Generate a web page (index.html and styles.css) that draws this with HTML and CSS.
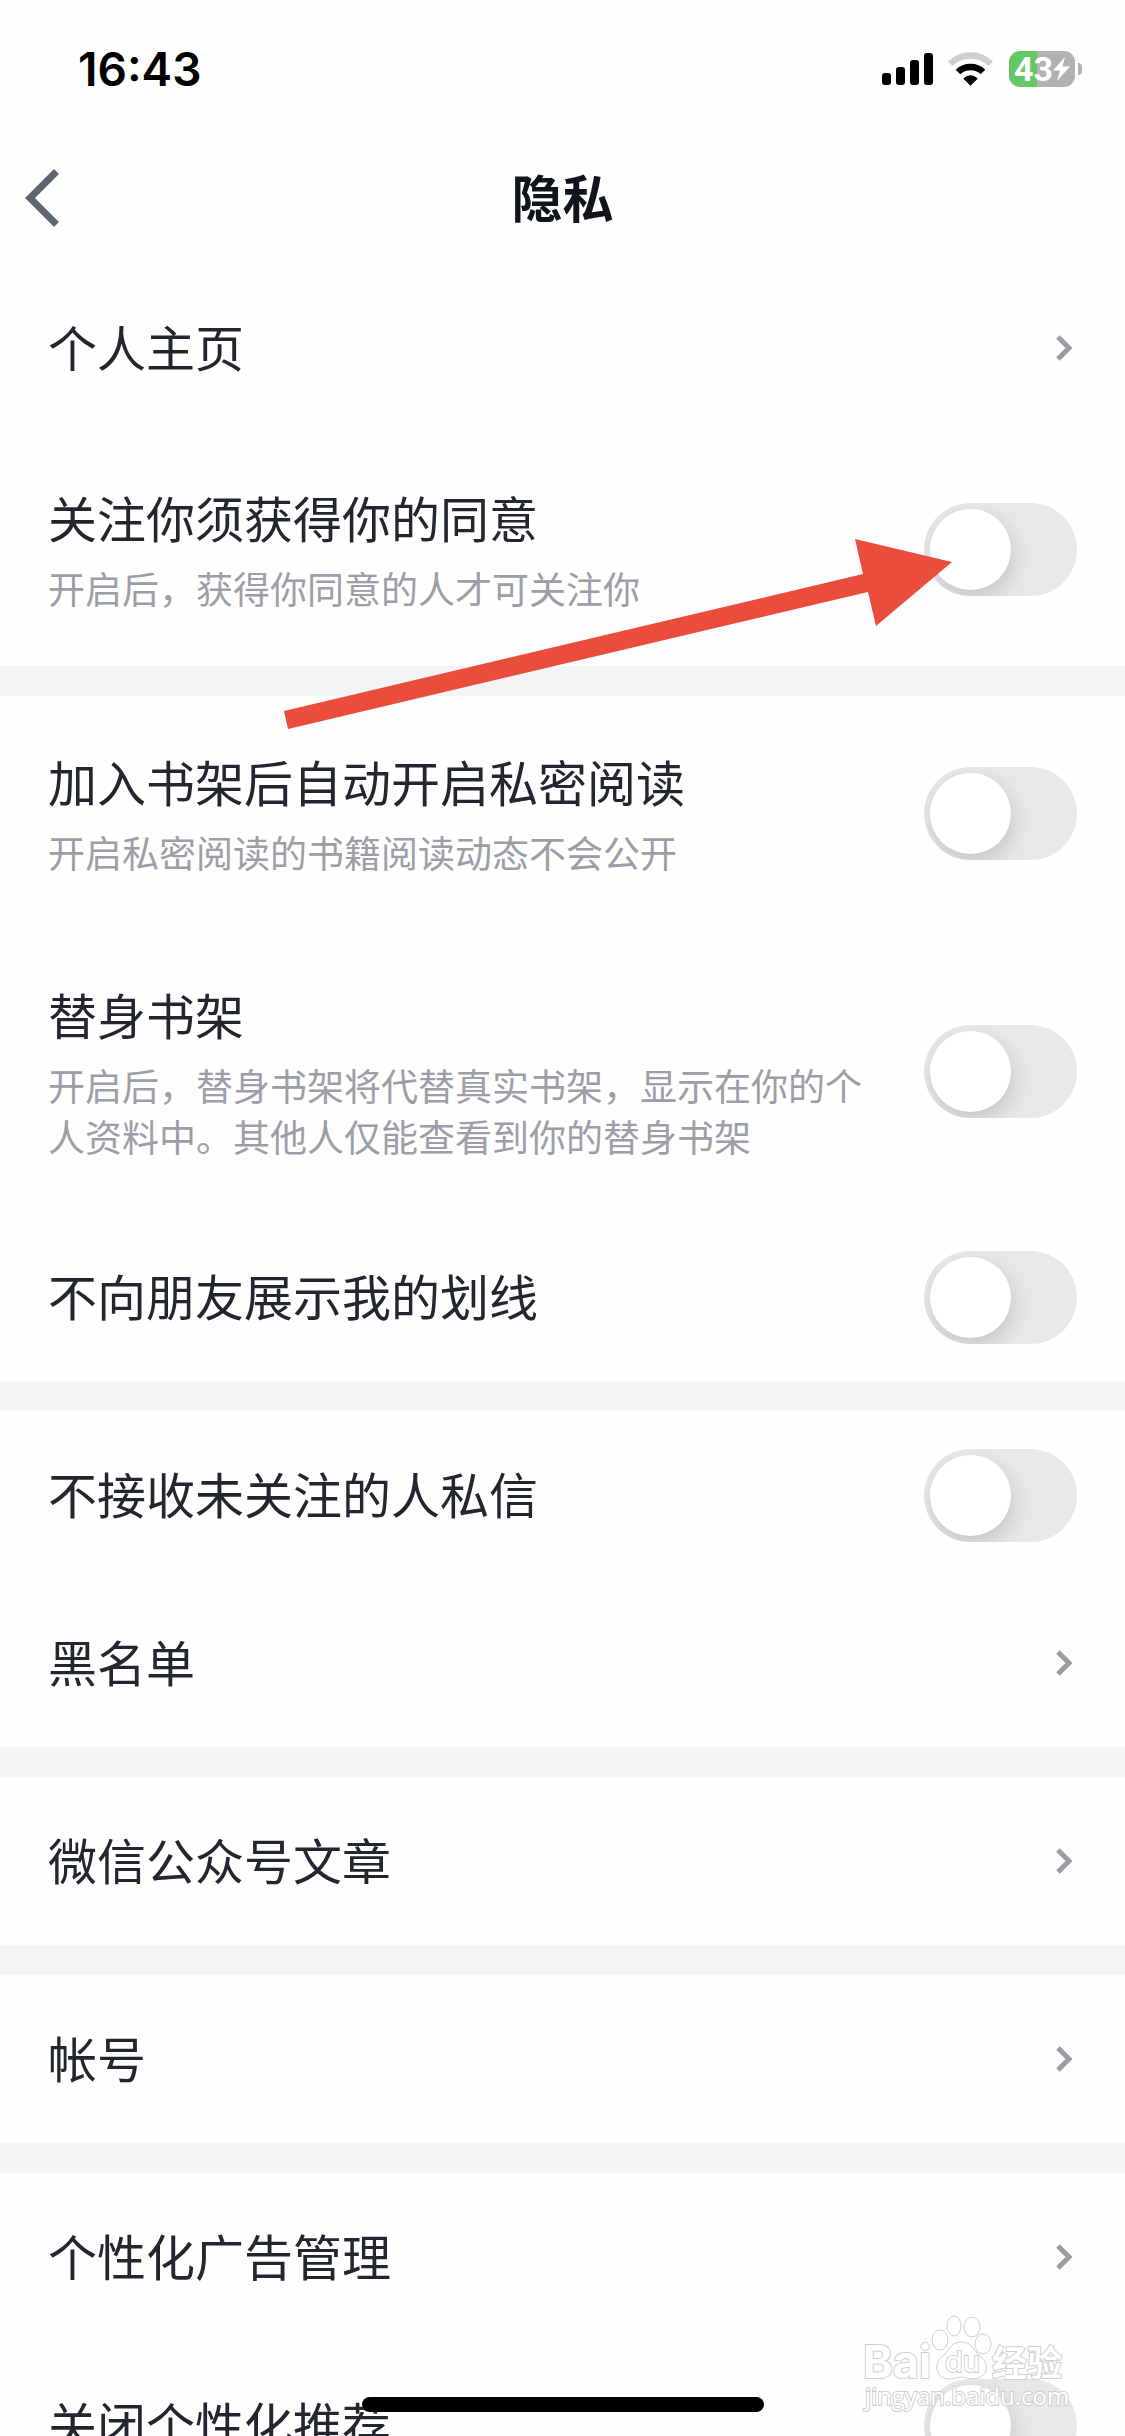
FILE: index.html
```html
<!DOCTYPE html>
<html lang="zh-CN">
<head>
<meta charset="utf-8">
<meta name="viewport" content="width=device-width, initial-scale=1">
<title>隐私</title>
<link rel="stylesheet" href="styles.css">
</head>
<body>
<div class="screen">
  <div class="status-bar">
    <span class="clock">16:43</span>
    <div class="status-icons">
      <svg class="signal" width="51" height="36" viewBox="0 0 51 36" aria-hidden="true">
        <rect x="0" y="22" width="9" height="12" rx="3"/>
        <rect x="14" y="16" width="9" height="18" rx="3"/>
        <rect x="28" y="9" width="9" height="25" rx="3"/>
        <rect x="42" y="2" width="9" height="32" rx="3"/>
      </svg>
      <svg class="wifi" width="46" height="36" viewBox="0 0 46 36" fill="none" stroke="#000" aria-hidden="true">
        <path d="M2.2 12.8A29 29 0 0 1 42.8 12.8" stroke="#cfcfcf" stroke-width="6.5"/>
        <path d="M10 21A18 18 0 0 1 35 21" stroke-width="6.5"/>
        <path d="M22.5 34.2L15.8 27.6Q22.5 21.8 29.2 27.6Z" fill="#000" stroke-width="1" stroke-linejoin="round"/>
      </svg>
      <div class="battery">
        <div class="battery-body">
          <span>43</span>
          <svg width="17" height="24" viewBox="0 0 17 24" aria-hidden="true"><path d="M12 0L0 13.5H7L4 24L17 9.5H9.500Z" fill="#fff"/></svg>
        </div>
        <div class="battery-cap"></div>
      </div>
    </div>
  </div>

  <header class="nav">
    <button class="back" type="button" aria-label="返回">
      <svg width="36" height="60" viewBox="0 0 36 60" aria-hidden="true"><path d="M32.500 3.500L6 30L32.500 56.500" fill="none" stroke="#5e656f" stroke-width="7"/></svg>
    </button>
    <h1>隐私</h1>
  </header>

  <main class="settings">
    <section class="group">
      <a class="row" href="#profile"><span class="title">个人主页</span><svg class="chevron" viewBox="0 0 16 26" aria-hidden="true"><path d="M2 2L13 13L2 24"/></svg></a>
      <label class="row row-tall"><span class="text"><span class="title">关注你须获得你的同意</span><span class="note">开启后，获得你同意的人才可关注你</span></span><input class="switch" type="checkbox" role="switch"></label>
    </section>
    <section class="group">
      <label class="row row-tall"><span class="text"><span class="title">加入书架后自动开启私密阅读</span><span class="note">开启私密阅读的书籍阅读动态不会公开</span></span><input class="switch" type="checkbox" role="switch"></label>
      <label class="row row-tall"><span class="text"><span class="title">替身书架</span><span class="note">开启后，替身书架将代替真实书架，显示在你的个人资料中。其他人仅能查看到你的替身书架</span></span><input class="switch" type="checkbox" role="switch"></label>
      <label class="row"><span class="title">不向朋友展示我的划线</span><input class="switch" type="checkbox" role="switch"></label>
    </section>
    <section class="group">
      <label class="row"><span class="title">不接收未关注的人私信</span><input class="switch" type="checkbox" role="switch"></label>
      <a class="row" href="#blocked"><span class="title">黑名单</span><svg class="chevron" viewBox="0 0 16 26" aria-hidden="true"><path d="M2 2L13 13L2 24"/></svg></a>
    </section>
    <section class="group">
      <a class="row" href="#articles"><span class="title">微信公众号文章</span><svg class="chevron" viewBox="0 0 16 26" aria-hidden="true"><path d="M2 2L13 13L2 24"/></svg></a>
    </section>
    <section class="group">
      <a class="row" href="#account"><span class="title">帐号</span><svg class="chevron" viewBox="0 0 16 26" aria-hidden="true"><path d="M2 2L13 13L2 24"/></svg></a>
    </section>
    <section class="group">
      <a class="row" href="#ads"><span class="title">个性化广告管理</span><svg class="chevron" viewBox="0 0 16 26" aria-hidden="true"><path d="M2 2L13 13L2 24"/></svg></a>
      <label class="row"><span class="title">关闭个性化推荐</span><input class="switch" type="checkbox" role="switch"></label>
    </section>
  </main>

  <svg class="pointer" width="668" height="190" viewBox="0 0 668 190" aria-hidden="true">
    <path d="M0 172L579 35L571 0L668 23L592 87L584 53L4 190Z" fill="#ea4d3c"/>
  </svg>

  <svg class="watermark" width="210" height="106" viewBox="0 0 210 106" role="img" aria-label="Baidu 经验">
    <g class="mark">
      <text class="mark-latin" x="2" y="66">Bai</text>
      <ellipse cx="79" cy="28" rx="8" ry="10"/>
      <ellipse cx="93" cy="14" rx="7" ry="10"/>
      <ellipse cx="111" cy="15" rx="8" ry="10"/>
      <ellipse cx="122" cy="32" rx="8" ry="10"/>
      <path d="M100 30C89 30 87 41 81 45C73 51 74 66 87 67C94 67 96 65 100 65C105 65 109 68 116 66C127 64 128 51 121 46C113 40 112 30 100 30Z"/>
      <text class="mark-du" x="84" y="60">du</text>
      <text class="mark-han" x="131" y="64">经验</text>
      <text class="mark-url" x="4" y="93">jingyan.baidu.com</text>
    </g>
  </svg>

  <div class="home-indicator"></div>
</div>
</body>
</html>
```
FILE: styles.css
```css
* {
  box-sizing: border-box;
}

body {
  margin: 0;
  background: #fefefe;
  color: #22272f;
  font-family: "Noto Sans CJK SC", sans-serif;
}

.screen {
  position: relative;
  height: 100vh;
  overflow: hidden;
}

.status-bar {
  display: flex;
  align-items: center;
  justify-content: space-between;
  height: 132px;
  padding: 6px 43px 0 78px;
}

.clock {
  color: #000;
  font: 600 46px/60px Inter, sans-serif;
}

.status-icons {
  display: flex;
  align-items: center;
  gap: 15px;
}

.battery {
  display: flex;
  align-items: center;
  gap: 3px;
}

.battery-body {
  display: flex;
  align-items: center;
  justify-content: center;
  width: 66px;
  height: 36px;
  border-radius: 11px;
  background: linear-gradient(90deg, #63c765 28px, #b2b2b2 28px);
  color: #fff;
  font: 700 34px/36px Roboto, sans-serif;
}

.battery-cap {
  width: 4px;
  height: 12px;
  border-radius: 0 6px 6px 0;
  background: #b2b2b2;
}

.nav {
  display: grid;
  grid-template-columns: 1fr auto 1fr;
  align-items: center;
  height: 132px;
  padding: 0 24px;
}

.nav h1 {
  margin: 0;
  padding-bottom: 4px;
  color: #10151d;
  font-size: 51px;
  font-weight: 700;
  line-height: 66px;
}

.back {
  display: flex;
  justify-self: start;
  padding: 0;
  border: 0;
  background: none;
}

.group + .group {
  border-top: 30px solid #f3f4f6;
}

.row {
  display: flex;
  align-items: center;
  justify-content: space-between;
  gap: 48px;
  min-height: 168px;
  padding: 0 48px;
  color: inherit;
  text-decoration: none;
}

.row-tall {
  min-height: 234px;
  padding: 51px 48px;
}

.text {
  display: flex;
  flex: 1;
  flex-direction: column;
  gap: 9px;
}

.title {
  padding-bottom: 5px;
  font-size: 49px;
  line-height: 65px;
}

.note {
  color: #9c9fa7;
  font-size: 37px;
  line-height: 51px;
}

.chevron {
  flex: none;
  width: 16px;
  height: 26px;
  margin-right: 5px;
  fill: none;
  stroke: #9a9da6;
  stroke-width: 5px;
}

.switch {
  flex: none;
  width: 153px;
  height: 93px;
  margin: 0;
  padding: 6px;
  border-radius: 47px;
  background: #e8e8ea;
  overflow: hidden;
  appearance: none;
}

.switch::before {
  content: "";
  display: block;
  width: 81px;
  height: 81px;
  border-radius: 50%;
  background: #fff;
  box-shadow: 2px 8px 20px rgba(0, 0, 0, 0.15);
}

.switch:checked {
  background: #34c759;
}

.switch:checked::before {
  margin-left: auto;
}

.pointer {
  position: absolute;
  top: 539px;
  left: 284px;
  pointer-events: none;
}

.watermark {
  position: absolute;
  right: 54px;
  bottom: 18px;
  pointer-events: none;
}

.mark {
  fill: #fff;
  stroke: #d0d0d0;
  stroke-width: 1px;
}

.mark text {
  paint-order: stroke;
  stroke-width: 2px;
}

.mark-latin {
  font: 700 45px Inter, sans-serif;
}

.mark-du {
  font: 400 29px Inter, sans-serif;
}

.mark-han {
  font: 700 35px "Noto Sans CJK SC", sans-serif;
}

.mark-url {
  font: 400 24px "Open Sans", sans-serif;
}

.home-indicator {
  position: absolute;
  bottom: 24px;
  left: 50%;
  width: 402px;
  height: 15px;
  margin-left: -201px;
  border-radius: 8px;
  background: #000;
}
```
